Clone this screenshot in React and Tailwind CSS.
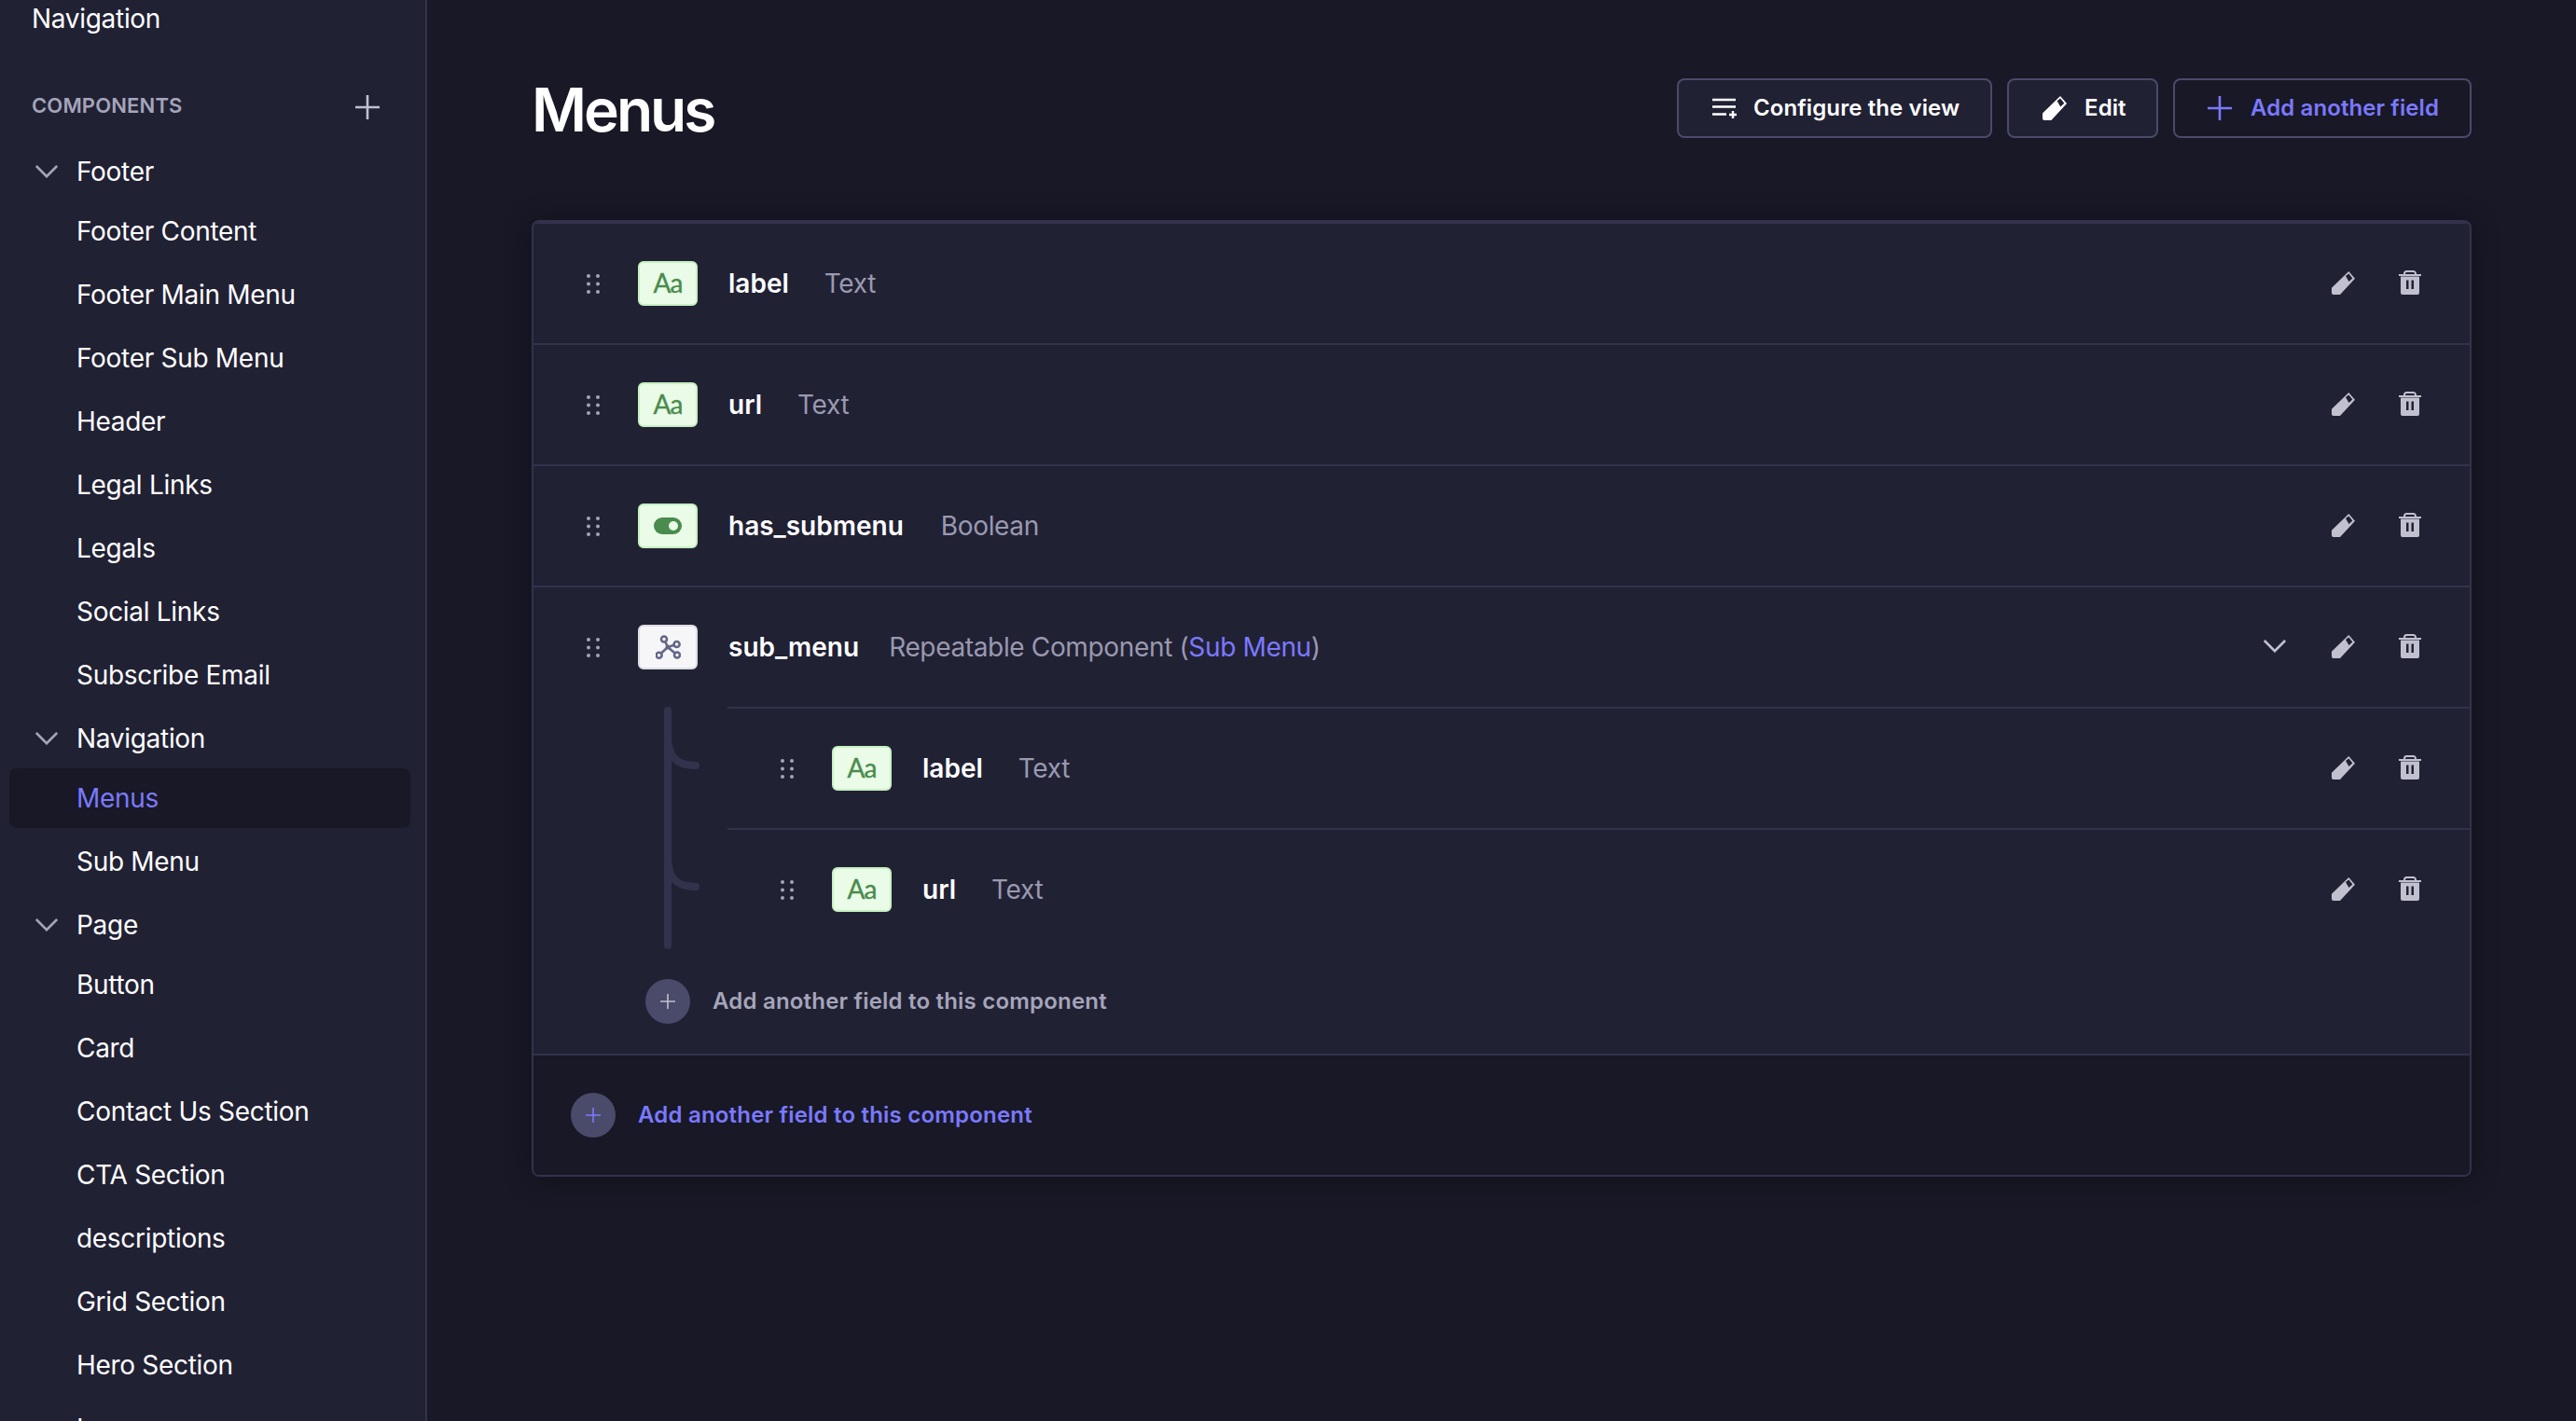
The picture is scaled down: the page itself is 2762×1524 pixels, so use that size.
const footerItems = ["Footer Content", "Footer Main Menu", "Footer Sub Menu", "Header", "Legal Links", "Legals", "Social Links", "Subscribe Email"];
const pageItems = ["Button", "Card", "Contact Us Section", "CTA Section", "descriptions", "Grid Section", "Hero Section", "Logo"];

function Chevron({ className }) {
  return (
    <svg viewBox="0 0 24 14" fill="none" className={className}>
      <path d="M.8 1 12 12.200 23.200 1" stroke="currentColor" strokeWidth="2.700" />
    </svg>
  );
}

function Plus({ className }) {
  return (
    <svg viewBox="0 0 26 26" fill="none" className={className}>
      <path d="M13 0v26M0 13h26" stroke="currentColor" strokeWidth="2.600" />
    </svg>
  );
}

function Pencil({ className }) {
  return (
    <svg viewBox="0 0 25 25" className={className}>
      <path
        fillRule="evenodd"
        fill="currentColor"
        d="M0 17.700 18.300 0 25 7.700 9 25H2Q0 25 0 23ZM15 5l3.400-2.500 4 5-3.900 3.500Z"
      />
    </svg>
  );
}

function Trash({ className }) {
  return (
    <svg viewBox="0 0 24 26" className={className}>
      <path d="M6 4.500V3.500A2.500 2.500 0 0 1 8.500 1h7A2.500 2.500 0 0 1 18 3.500v1" fill="none" stroke="currentColor" strokeWidth="2" />
      <path d="M0 4h24v2H0z" fill="currentColor" />
      <path
        fillRule="evenodd"
        fill="currentColor"
        d="M2 6.500h20V24a2 2 0 0 1-2 2H4a2 2 0 0 1-2-2ZM8 10.500v9.500h2.500v-9.500ZM13.500 10.500v9.500H16v-9.500Z"
      />
    </svg>
  );
}

function Dots() {
  return (
    <svg viewBox="0 0 14 21" className="h-[21px] w-[14px] shrink-0 text-[#a5a5ba]">
      {[2, 10.5, 19].map((y) =>
        [2, 12].map((x) => <circle key={`${x}-${y}`} cx={x} cy={y} r="2" fill="currentColor" />)
      )}
    </svg>
  );
}

function TextBadge() {
  return (
    <span className="flex h-12 w-16 shrink-0 items-center justify-center rounded-md border-2 border-[#c6f0c2] bg-[#eafbe7] pb-[3px] font-['Lato',sans-serif] text-[28px] font-normal leading-none tracking-[-1px] text-[#4a8b4e] [-webkit-text-stroke:0.4px_#4a8b4e]">
      Aa
    </span>
  );
}

function BooleanBadge() {
  return (
    <span className="flex h-12 w-16 shrink-0 items-center justify-center rounded-md border-2 border-[#c6f0c2] bg-[#eafbe7]">
      <svg viewBox="0 0 30 18" className="h-[18px] w-[30px]">
        <rect width="30" height="18" rx="9" fill="#4a8b4e" />
        <circle cx="21" cy="9" r="5" fill="#eafbe7" />
      </svg>
    </span>
  );
}

function ComponentBadge() {
  return (
    <span className="flex h-12 w-16 shrink-0 items-center justify-center rounded-md border-2 border-[#dcdce4] bg-[#f6f6f9]">
      <svg viewBox="0 0 27 26" fill="none" stroke="#666687" strokeWidth="2.600" className="h-[26px] w-[27px]">
        <path d="M9 4.500 13 13M22.600 10 13 13M3.600 21.700 13 13M23 21.500 13 13" />
        <circle cx="9" cy="4.500" r="3" fill="#f6f6f9" />
        <circle cx="22.600" cy="10" r="3" fill="#f6f6f9" />
        <circle cx="3.600" cy="21.700" r="3" fill="#f6f6f9" />
        <circle cx="23" cy="21.500" r="3" fill="#f6f6f9" />
        <circle cx="13" cy="13" r="2.500" fill="#666687" stroke="none" />
      </svg>
    </span>
  );
}

function FieldRow({ badge, name, gap, expandable, divided, children }) {
  return (
    <div className={`flex h-[130px] items-center pl-[57px] pr-[52px] ${divided ? "border-b-2 border-[#32324d]" : ""}`}>
      <Dots />
      <span className="ml-[41px]">{badge}</span>
      <span className="ml-[33px] text-[28px] font-semibold text-white">{name}</span>
      <span className={`${gap} text-[28px] tracking-[-0.35px] text-[#9999b0]`}>{children}</span>
      <div className="mb-[2px] ml-auto flex items-center text-[#c0c0cf]">
        {expandable ? <Chevron className="mr-[49px] h-[14px] w-6 text-[#c0c0cf]" /> : null}
        <Pencil className="h-[25px] w-[25px]" />
        <Trash className="ml-[47px] h-[26px] w-6" />
      </div>
    </div>
  );
}

function AddField({ className, circleText, text }) {
  return (
    <div className={`flex items-center ${className}`}>
      <span className={`flex h-12 w-12 items-center justify-center rounded-full bg-[#4a4a6a] ${circleText}`}>
        <Plus className="h-4 w-4" />
      </span>
      <span className={`ml-6 text-2xl font-semibold tracking-[0.2px] ${text}`}>Add another field to this component</span>
    </div>
  );
}

function SidebarGroup({ title, items, active }) {
  return (
    <div>
      <div className="flex h-16 items-center pl-[38px] text-white">
        <Chevron className="h-[14px] w-6 text-[#a5a5ba]" />
        <span className="ml-5">{title}</span>
      </div>
      {items.map((item) => (
        <div
          key={item}
          className={`mb-1 ml-2.5 mr-4 flex h-16 items-center rounded-lg pl-[72px] ${
            item === active ? "bg-[#181826] text-[#7b79ff]" : "text-white"
          }`}
        >
          {item}
        </div>
      ))}
    </div>
  );
}

export default function App() {
  return (
    <div className="flex h-screen w-full overflow-hidden bg-[#181826] font-['Inter',sans-serif] antialiased">
      <aside className="h-full w-[458px] shrink-0 overflow-hidden border-r-2 border-[#32324d] bg-[#212134] text-[28px] tracking-[-0.3px]">
        <div className="flex h-10 items-center pl-[34px] text-white">Navigation</div>
        <div className="mb-[19px] mt-[53px] flex h-10 items-center justify-between pl-[34px] pr-[49px]">
          <span className="text-[22px] font-semibold tracking-[0.15px] text-[#a5a5ba]">COMPONENTS</span>
          <Plus className="mt-[3px] h-[26px] w-[26px] text-[#c0c0cf]" />
        </div>
        <SidebarGroup title="Footer" items={footerItems} />
        <SidebarGroup title="Navigation" items={["Menus", "Sub Menu"]} active="Menus" />
        <SidebarGroup title="Page" items={pageItems} />
      </aside>

      <main className="min-w-0 flex-1 pl-[112px] pr-[112px] pt-[84px]">
        <header className="flex h-16 items-center justify-between">
          <h1 className="mt-[3px] text-[64px] font-semibold leading-none tracking-[-3px] text-white">Menus</h1>
          <div className="flex gap-4 text-2xl font-semibold tracking-[0.1px]">
            <button className="flex h-16 w-[338px] items-center rounded-lg border-2 border-[#4a4a6a] bg-[#212134] pl-9 text-white">
              <svg viewBox="0 0 28 22" fill="none" stroke="currentColor" strokeWidth="2.400" className="h-[22px] w-7">
                <path d="M0 2h25M0 9.500h25M0 17.500h15M22 14v8M18 18h8" />
              </svg>
              <span className="ml-4">Configure the view</span>
            </button>
            <button className="flex h-16 w-[162px] items-center rounded-lg border-2 border-[#4a4a6a] bg-[#212134] pl-9 text-white">
              <Pencil className="h-[26px] w-[26px]" />
              <span className="ml-[19px]">Edit</span>
            </button>
            <button className="flex h-16 w-80 items-center rounded-lg border-2 border-[#4a4a6a] bg-[#181826] pl-[35px] text-[#7b79ff]">
              <Plus className="h-[26px] w-[26px]" />
              <span className="ml-5">Add another field</span>
            </button>
          </div>
        </header>

        <section className="mt-[88px] overflow-hidden rounded-lg border-2 border-[#32324d] bg-[#212134] shadow-[0_2px_30px_rgba(3,3,5,0.25)]">
          <div className="border-t-2 border-[#32324d]">
            <FieldRow badge={<TextBadge />} name="label" gap="ml-[38px]" divided>Text</FieldRow>
            <FieldRow badge={<TextBadge />} name="url" gap="ml-[38px]" divided>Text</FieldRow>
            <FieldRow badge={<BooleanBadge />} name="has_submenu" gap="ml-[40px]" divided>Boolean</FieldRow>
            <div className="[&>div:first-child]:h-[128px]">
              <FieldRow badge={<ComponentBadge />} name="sub_menu" gap="ml-8" expandable>
                Repeatable Component (<span className="text-[#7b79ff]">Sub Menu</span>)
              </FieldRow>
              <div className="relative">
                <svg viewBox="0 0 40 260" fill="none" stroke="#32324d" strokeWidth="8" strokeLinecap="round" className="absolute left-[140px] top-0 h-[260px] w-10">
                  <path d="M4 4v252M4 30c0 25 10 33 30 33M4 160c0 25 10 33 30 33" />
                </svg>
                <div className="ml-[208px] border-t-2 border-[#32324d]">
                  <FieldRow badge={<TextBadge />} name="label" gap="ml-[38px]" divided>Text</FieldRow>
                  <div className="[&>div]:h-[128px]">
                    <FieldRow badge={<TextBadge />} name="url" gap="ml-[38px]">Text</FieldRow>
                  </div>
                </div>
                <AddField className="h-[112px] pl-[120px]" circleText="text-[#c0c0cf]" text="text-[#a5a5ba]" />
              </div>
            </div>
          </div>
          <div className="border-t-2 border-[#32324d] bg-[#181826]">
            <AddField className="h-32 pl-10" circleText="text-[#7b79ff]" text="text-[#7b79ff]" />
          </div>
        </section>
      </main>
    </div>
  );
}
